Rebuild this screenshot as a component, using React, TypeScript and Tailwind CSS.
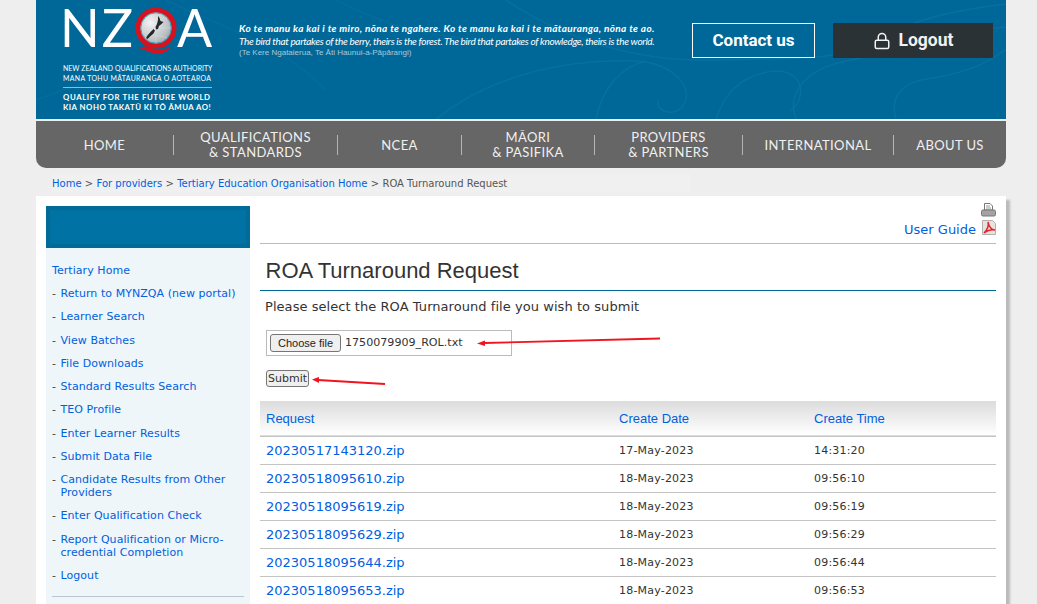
import { Lock } from "lucide-react";

const navItems = [
  { label: ["HOME"], width: "w-[137px]" },
  { label: ["QUALIFICATIONS", "& STANDARDS"], width: "w-[163px]" },
  { label: ["NCEA"], width: "w-[123px]" },
  { label: ["MĀORI", "& PASIFIKA"], width: "w-[132px]" },
  { label: ["PROVIDERS", "& PARTNERS"], width: "w-[147px]" },
  { label: ["INTERNATIONAL"], width: "w-[150px]" },
  { label: ["ABOUT US"], width: "w-[112px]" },
];

const sideLinks = [
  "Return to MYNZQA (new portal)",
  "Learner Search",
  "View Batches",
  "File Downloads",
  "Standard Results Search",
  "TEO Profile",
  "Enter Learner Results",
  "Submit Data File",
  "Candidate Results from Other Providers",
  "Enter Qualification Check",
  "Report Qualification or Micro-credential Completion",
  "Logout",
];

const rows = [
  ["20230517143120.zip", "17-May-2023", "14:31:20"],
  ["20230518095610.zip", "18-May-2023", "09:56:10"],
  ["20230518095619.zip", "18-May-2023", "09:56:19"],
  ["20230518095629.zip", "18-May-2023", "09:56:29"],
  ["20230518095644.zip", "18-May-2023", "09:56:44"],
  ["20230518095653.zip", "18-May-2023", "09:56:53"],
];

function QMark() {
  return (
    <svg width="42" height="55" viewBox="0 0 42 55" className="shrink-0">
      <defs>
        <radialGradient id="globe" cx="0.35" cy="0.35" r="0.8">
          <stop offset="0" stopColor="#f2f3f4" />
          <stop offset="0.6" stopColor="#bfc4c7" />
          <stop offset="1" stopColor="#84949c" />
        </radialGradient>
      </defs>
      <path d="M3 47c6-2 10-2 14 0s10 3 19-1c-3 5-11 8-18 6s-9-4-15-5z" fill="#d5121f" />
      <circle cx="21" cy="27" r="18" fill="url(#globe)" stroke="#d5121f" strokeWidth="5" />
      <circle cx="21" cy="27" r="15.2" fill="none" stroke="#2f9dbb" strokeWidth="0.9" />
      <path d="M6 27h30M21 12v30M10 17c7 3 15 3 22 0M10 37c7-3 15-3 22 0" fill="none" stroke="#d6d9db" strokeWidth="0.5" />
      <path d="M23 15l1.5 2 1 3 3 1-2 2-2.500 2-1 3-2 .5-.5-2.500 1.500-3 1-4z" fill="#23282b" />
      <path d="M18.500 28l1.500 1.500-1.500 3-3.500 3-2.500 2.500-1.500-1 1.500-2.500 3-3.500z" fill="#23282b" />
    </svg>
  );
}

function HeaderPattern() {
  return (
    <svg
      className="absolute inset-0 h-full w-full"
      viewBox="0 0 970 119"
      fill="none"
      stroke="#08709c"
      strokeWidth="1.5"
    >
      <path d="M470 0c60 40 130 62 210 60s120 2 160-20 80-30 130-36" />
      <path d="M400 119c50-40 120-60 200-58 40 2 60 30 46 46-10 10-26 4-24-6" />
      <path d="M560 119c6-30 24-52 50-58M680 119c10-30 30-46 60-48 30 0 30 30 14 40" />
      <path d="M760 119c-10-26 10-50 50-58 50-10 100-30 160-34" />
      <path d="M860 119c-6-20 4-36 30-40 30-4 60-14 80-30" />
      <path d="M130 0c60 30 110 40 160 90M0 100c50-20 100-30 140-20" opacity="0.6" />
      <path d="M300 0c50 26 90 36 150 40" opacity="0.6" />
    </svg>
  );
}

function Arrow({ className, width, height, d, tip }: { className: string; width: number; height: number; d: string; tip: string }) {
  return (
    <svg className={`absolute ${className}`} width={width} height={height} viewBox={`0 0 ${width} ${height}`}>
      <path d={d} stroke="#f0141e" strokeWidth="1.8" fill="none" />
      <path d={tip} fill="#f0141e" />
    </svg>
  );
}

function PrintIcon() {
  return (
    <svg width="15" height="14" viewBox="0 0 15 14">
      <path d="M3.5 .5h5.5l2.5 2.5v4h-8z" fill="#fff" stroke="#777" />
      <path d="M5 3h4M5 5h5" stroke="#999" />
      <rect x=".5" y="7" width="14" height="6" rx="1.5" fill="#a3a3a3" stroke="#777" />
    </svg>
  );
}

function PdfIcon() {
  return (
    <svg width="14" height="15" viewBox="0 0 14 15">
      <path d="M.5 .5h10l3 3v11h-13z" fill="#e6e2e0" stroke="#b5b0ad" />
      <path d="M6 2c1 4-1 8-4 11 4-3 7-4 11-3-3 0-6-3-7-8z" fill="none" stroke="#e3242b" strokeWidth="1.5" />
    </svg>
  );
}

export default function App() {
  return (
    <div className="h-[604px] w-[1037px] overflow-hidden bg-[#eeeeee] font-['DejaVu_Sans',sans-serif] text-[#333]">
      <div className="ml-[36px] w-[970px]">
        <header className="relative flex h-[119px] bg-[#006899] pl-[27px] pt-[1px]">
          <HeaderPattern />
          <div className="relative w-[176px] text-white">
            <div className="-ml-[3px] flex h-[55px] items-start font-['Lato',sans-serif] text-[52px] font-normal leading-[53px]">
              <span className="tracking-[2px]">NZ</span>
              <QMark />
              <span>A</span>
            </div>
            <div className="mt-[7px] w-[150px] whitespace-nowrap font-['Lato',sans-serif] text-[6.9px] leading-[10px] tracking-[0.05px]">
              <p>NEW ZEALAND QUALIFICATIONS AUTHORITY</p>
              <p className="tracking-[0.37px]">MANA TOHU MĀTAURANGA O AOTEAROA</p>
            </div>
            <div className="mt-[4px] h-px w-[149px] bg-[#7fc0da]" />
            <div className="mt-[5px] w-[150px] whitespace-nowrap font-['Lato',sans-serif] text-[7.8px] font-bold leading-[9.5px] tracking-[0.61px]">
              <p>QUALIFY FOR THE FUTURE WORLD</p>
              <p className="tracking-[0.48px]">KIA NOHO TAKATŪ KI TŌ ĀMUA AO!</p>
            </div>
          </div>
          <div className="relative mt-[21px] w-[453px] whitespace-nowrap text-white">
            <p className="font-['Lato',sans-serif] text-[10px] font-bold italic leading-[13px] tracking-[0.35px]">
              Ko te manu ka kai i te miro, nōna te ngahere. Ko te manu ka kai i te mātauranga, nōna te ao.
            </p>
            <p className="font-['Lato',sans-serif] text-[10px] italic leading-[13px] tracking-[-0.33px]">
              The bird that partakes of the berry, theirs is the forest. The bird that partakes of knowledge, theirs is the world.
            </p>
            <p className="font-['Liberation_Sans',sans-serif] text-[8px] leading-[10px] text-[#a9c8d8]">
              (Te Kere Ngataierua, Te Āti Haunui-a-Pāpārangi)
            </p>
          </div>
          <div className="relative mt-[22px] flex h-[36px] items-start font-['Roboto',sans-serif] text-[17px] font-bold">
            <a className="flex h-[35px] w-[123px] items-center justify-center border border-white text-white">Contact us</a>
            <a className="ml-[18px] flex h-[35px] w-[160px] items-center justify-center gap-[8px] bg-[#2a3235] text-[17.5px] text-[#f2f2f2]">
              <Lock size={18} strokeWidth={2} />
              Logout
            </a>
          </div>
        </header>

        <nav className="mt-[2px] flex h-[47px] items-center rounded-b-[10px] bg-[#666666] pt-[1px] font-['Lato',sans-serif] text-[13px] leading-[15px] tracking-[0.4px] text-[#f0f0f0]">
          {navItems.map((item, i) => (
            <div key={i} className="contents">
              {i > 0 && <span className="h-[20px] w-px shrink-0 bg-[#b5b5b5]" />}
              <div className={`${item.width} text-center`}>
                {item.label.map((line) => (
                  <div key={line}>{line}</div>
                ))}
              </div>
            </div>
          ))}
        </nav>

        <div className="flex h-[28px] items-center pl-[16px] pt-[2px] text-[10px]">
          <div className="flex h-[18px] w-[639px] items-center bg-[#f0f0f0] text-[#555]">
            <a className="text-[#0060df]">Home</a>
            <span className="mx-[3.3px]">&gt;</span>
            <a className="text-[#0060df]">For providers</a>
            <span className="mx-[3.3px]">&gt;</span>
            <a className="text-[#0060df]">Tertiary Education Organisation Home</a>
            <span className="mx-[3.3px]">&gt;</span>
            <span>ROA Turnaround Request</span>
          </div>
        </div>

        <div className="flex h-[500px] bg-white pl-[10px] pt-[10px] shadow-[4px_4px_2px_#bbbbbb]">
          <aside className="w-[204px] shrink-0">
            <div className="h-[42px] border-[4px] border-[#006a99] bg-[#0072a3]" />
            <div className="h-[400px] bg-[#eef6fa] px-[6px] pt-[16px] text-[11px] leading-[13px] tracking-[0.06px] text-[#0060df]">
              <a className="block">Tertiary Home</a>
              <ul className="mt-[10px] flex flex-col gap-[10.25px]">
                {sideLinks.map((link) => (
                  <li key={link} className="flex">
                    <span className="w-[8.5px] shrink-0 text-[#444]">-</span>
                    <a className="block">{link}</a>
                  </li>
                ))}
              </ul>
              <div className="mt-[14px] h-px bg-[#bbc5ca]" />
            </div>
          </aside>

          <main className="relative ml-[10px] w-[736px]">
            <div className="-mt-[3px] flex h-[41px] flex-col items-end border-b border-[#bbbbbb]">
              <PrintIcon />
              <div className="mt-[3px] flex items-start gap-[6px] text-[13px] leading-[15px] text-[#0060df]">
                <a className="mt-[2px]">User Guide</a>
                <PdfIcon />
              </div>
            </div>
            <h1 className="border-b border-[#006899] px-[5.5px] pb-[5px] pt-[13px] font-['Liberation_Sans',sans-serif] text-[22px] font-normal leading-[28px] text-[#333]">
              ROA Turnaround Request
            </h1>
            <p className="px-[5px] pt-[8px] text-[13px] leading-[16px] tracking-[0.055px] text-[#333]">
              Please select the ROA Turnaround file you wish to submit
            </p>
            <div className="ml-[6px] mt-[15px] flex h-[26px] w-[246px] items-center border border-[#bbbbbb] pl-[3px]">
              <button className="h-[18px] w-[71px] rounded-[3px] border border-[#767676] bg-[#efefef] font-['Liberation_Sans',sans-serif] text-[11px] text-[#222]">
                Choose file
              </button>
              <span className="ml-[4px] mt-[1px] text-[11.1px]">1750079909_ROL.txt</span>
            </div>
            <button className="ml-[6px] mt-[14px] block h-[17px] w-[43px] rounded-[3px] border border-[#767676] bg-[#efefef] text-[11px] leading-[15px] text-[#333]">
              Submit
            </button>
            <Arrow className="left-[216px] top-[130px]" width={186} height={12} d="M8 7L184 2.5" tip="M1 7.5L9 4.5V10z" />
            <Arrow className="left-[52px] top-[169px]" width={76} height={12} d="M6 5L73 9" tip="M0 4.5L7 2V8z" />

            <table className="mt-[14px] w-full border-collapse">
              <thead>
                <tr className="h-[35px] border-b border-[#c4c4c4] bg-gradient-to-b from-[#dcdcdc] to-[#ffffff] text-left font-['Liberation_Sans',sans-serif] text-[13px] font-normal text-[#0060df]">
                  <th className="w-[353px] px-[6px] pt-[1px] font-normal">Request</th>
                  <th className="w-[195px] px-[6px] pt-[1px] font-normal">Create Date</th>
                  <th className="px-[6px] pt-[1px] font-normal">Create Time</th>
                </tr>
              </thead>
              <tbody>
                {rows.map((row) => (
                  <tr key={row[0]} className="h-[28px] border-b border-[#c4c4c4]">
                    <td className="px-[6px] pt-[2px] text-[13px] text-[#0060df]">{row[0]}</td>
                    <td className="px-[6px] pt-[2px] text-[11px] tracking-[0.2px]">{row[1]}</td>
                    <td className="px-[6px] pt-[2px] text-[11px] tracking-[0.2px]">{row[2]}</td>
                  </tr>
                ))}
              </tbody>
            </table>
          </main>
        </div>
      </div>
    </div>
  );
}
